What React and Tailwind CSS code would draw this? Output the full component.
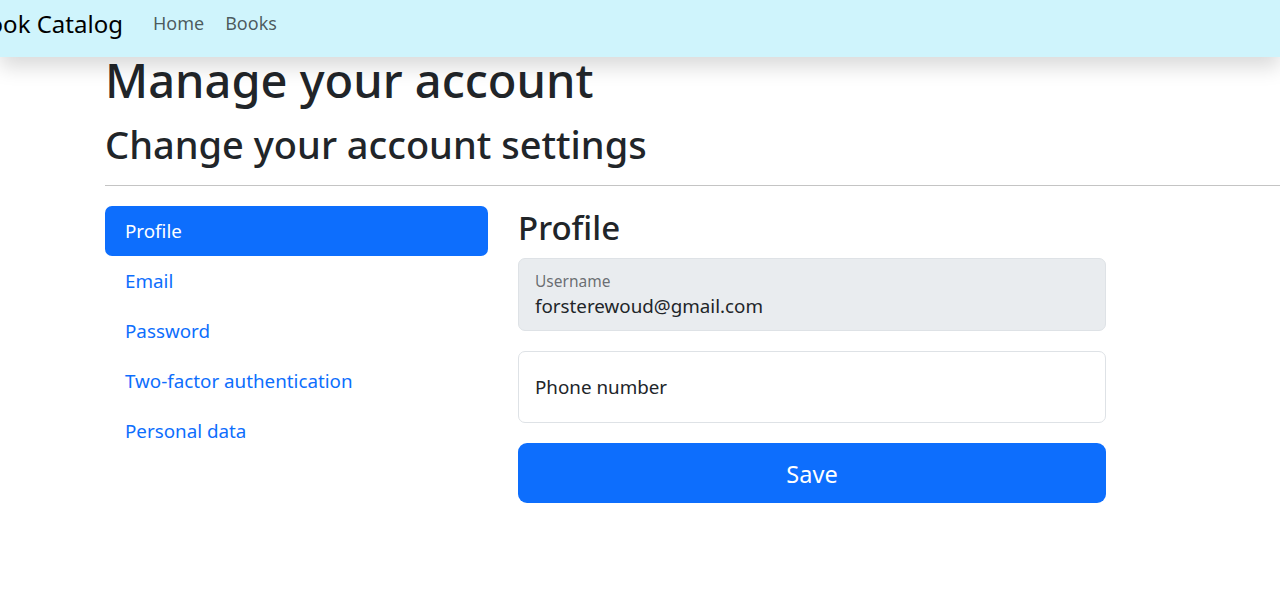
import React from 'react';

const font = { fontFamily: '"Noto Sans", "Liberation Sans", sans-serif' };

function Navbar() {
    return (
        <nav className="relative z-10 flex h-[57px] items-center overflow-hidden bg-[#cff4fc] pb-[10px] shadow-[0_10px_20px_rgba(0,0,0,0.15)]" data-name="navbar">
            <a className="ml-[-27px] mr-[30px] whitespace-nowrap text-[24px] leading-none text-black" href="#">Book Catalog</a>
            <ul className="flex items-center gap-[21px] text-[18px] text-black/65">
                <li>Home</li>
                <li>Books</li>
            </ul>
        </nav>
    );
}

function SideNav({ items, active }) {
    return (
        <ul className="flex w-[383px] flex-col" data-name="side-nav">
            {items.map(item => (
                <li
                    key={item}
                    className={`flex h-[50px] items-center rounded-[7px] px-[20px] text-[18.8px] ${
                        item === active ? 'bg-[#0d6efd] text-white' : 'text-[#0d6efd]'
                    }`}
                >
                    {item}
                </li>
            ))}
        </ul>
    );
}

function ProfileForm() {
    return (
        <div className="flex w-[588px] flex-col" data-name="profile-form">
            <h3 className="mb-[10px] pt-[2px] text-[33px] font-medium leading-[40px] text-[#212529]">Profile</h3>
            <div className="mb-[20px] flex h-[73px] flex-col justify-center rounded-[7px] border border-[#dee2e6] bg-[#e9ecef] px-[16px]">
                <span className="text-[15.5px] leading-[22px] text-[#212529]/65">Username</span>
                <span className="text-[18.8px] leading-[28px] text-[#212529]">forsterewoud@gmail.com</span>
            </div>
            <div className="mb-[20px] flex h-[72px] items-center rounded-[7px] border border-[#dee2e6] bg-white px-[16px]">
                <span className="text-[18.8px] text-[#212529]">Phone number</span>
            </div>
            <button type="submit" className="h-[60px] w-full rounded-[9px] bg-[#0d6efd] pt-[3px] text-[23.5px] text-white">
                Save
            </button>
        </div>
    );
}

export default function App() {
    return (
        <div className="min-h-[593px] overflow-hidden bg-white" style={font}>
            <Navbar />
            <main className="pl-[105px]">
                <h1 className="mt-[-7px] text-[47px] font-medium leading-[60px] text-[#212529]">Manage your account</h1>
                <h2 className="mt-[10px] text-[38px] font-medium leading-[48px] text-[#212529]">Change your account settings</h2>
                <hr className="mt-[17px] border-t border-[#c4c4c4]" />
                <div className="mt-[20px] flex gap-[30px]">
                    <SideNav items={['Profile', 'Email', 'Password', 'Two-factor authentication', 'Personal data']} active="Profile" />
                    <ProfileForm />
                </div>
            </main>
        </div>
    );
}
